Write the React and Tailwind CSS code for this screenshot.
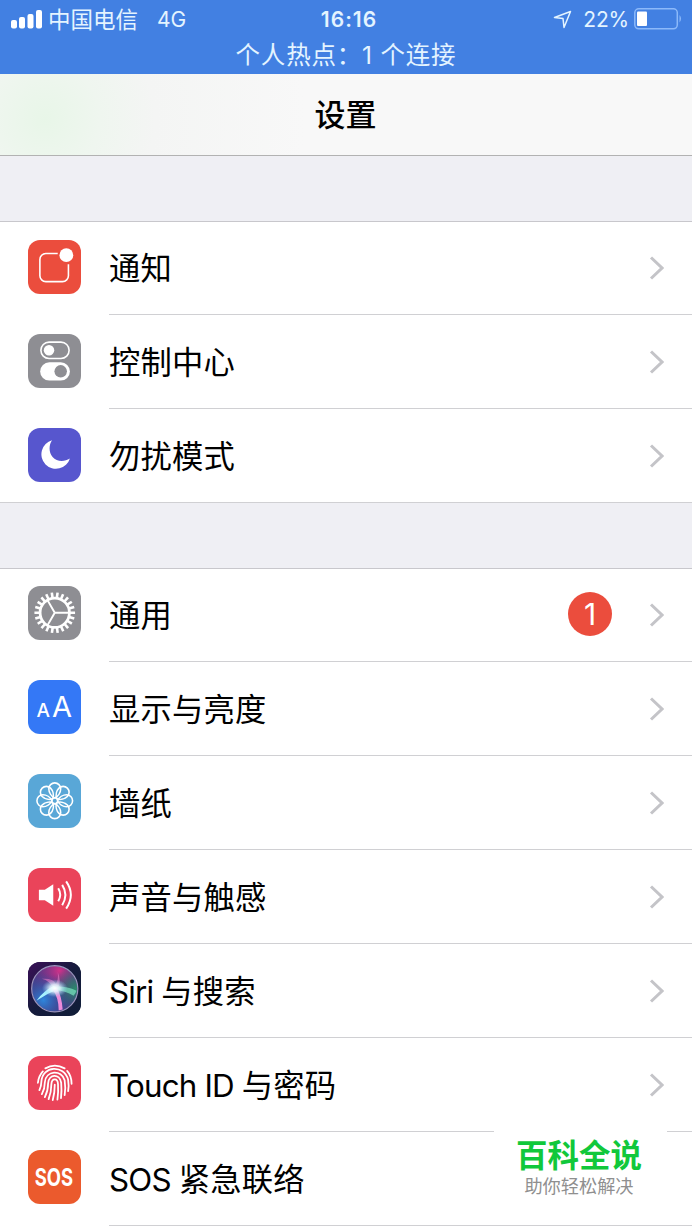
import React from 'react';

const GEAR_TEETH = Array.from({ length: 22 }, (_, i) => (i * 360) / 22);
const PETALS = Array.from({ length: 8 }, (_, i) => i * 45);

const NotificationsIcon = () => (
    <svg viewBox="0 0 54 54" className="w-full h-full" fill="none">
        <path
            d="M30 13.700H18a6 6 0 0 0-6 6V36a6 6 0 0 0 6 6h16.800a6 6 0 0 0 6-6V24.500"
            stroke="white"
            strokeWidth="1.600"
        />
        <circle cx="38.700" cy="15.300" r="7" fill="white" />
    </svg>
);

const ControlCenterIcon = () => (
    <svg viewBox="0 0 54 54" className="w-full h-full" fill="none">
        <rect x="13" y="8.200" width="28.500" height="16.500" rx="8.250" stroke="white" strokeWidth="1.600" />
        <circle cx="21.200" cy="16.400" r="5.300" fill="white" />
        <rect x="12.300" y="28.500" width="30" height="18.500" rx="9.250" fill="white" />
        <circle cx="33" cy="37.700" r="6.300" fill="#8e8e93" />
    </svg>
);

const MoonIcon = () => (
    <svg viewBox="0 0 54 54" className="w-full h-full">
        <path d="M24.300 12.300A14.700 14.700 0 1 0 42.300 30.700C36.500 34.500 29 34 24.800 29.200C20.700 24.500 21 17 24.300 12.300Z" fill="white" />
    </svg>
);

const GearIcon = () => (
    <svg viewBox="0 0 54 54" className="w-full h-full" fill="none" stroke="white">
        <circle cx="27" cy="27" r="14.800" strokeWidth="2.800" />
        {GEAR_TEETH.map((deg) => (
            <path key={deg} d="M27 12V6.500" strokeWidth="2.600" transform={`rotate(${deg + 8} 27 27)`} />
        ))}
        <path d="M27 27H42M27 27L19.500 14M27 27L19.500 40" strokeWidth="2" />
    </svg>
);

const DisplayIcon = () => (
    <div className="h-full flex items-baseline justify-center pt-[7px] text-white">
        <span className="text-[19px] leading-[40px] font-medium">A</span>
        <span className="ml-[2px] text-[29px] leading-[40px]">A</span>
    </div>
);

const WallpaperIcon = () => (
    <svg viewBox="0 0 54 54" className="w-full h-full" fill="none" stroke="white" strokeWidth="1.600">
        {PETALS.map((deg) => (
            <path
                key={deg}
                d="M27 24.200C23.500 22.500 21 18.500 21 15a6 6 0 0 1 12 0C33 18.500 30.500 22.500 27 24.200Z"
                transform={`rotate(${deg} 27 27)`}
            />
        ))}
        <circle cx="27" cy="27" r="3" />
    </svg>
);

const SoundIcon = () => (
    <svg viewBox="0 0 54 54" className="w-full h-full" fill="none" stroke="white">
        <path d="M11 22H17L25.500 16.500V38L17 32.500H11Z" fill="white" stroke="none" />
        <path d="M30.500 20.500Q34.500 27 30.500 33.500" strokeWidth="2" />
        <path d="M34.500 17Q41 27 34.500 37.500" strokeWidth="2" />
        <path d="M38.500 13.500Q48 27 38.500 41" strokeWidth="2" />
    </svg>
);

const SiriIcon = () => (
    <svg viewBox="0 0 54 54" className="w-full h-full" fill="none">
        <defs>
            <linearGradient id="siriBg" x1="0" y1="0" x2="1" y2="1">
                <stop offset="0" stopColor="#3b1058" />
                <stop offset="0.5" stopColor="#151b3c" />
                <stop offset="1" stopColor="#101e38" />
            </linearGradient>
            <radialGradient id="siriPink" cx="0.6" cy="0.1" r="0.65">
                <stop offset="0" stopColor="#cf3288" />
                <stop offset="1" stopColor="#7a2d8c" stopOpacity="0" />
            </radialGradient>
            <radialGradient id="siriBlue" cx="0.25" cy="0.75" r="0.6">
                <stop offset="0" stopColor="#2f86dc" />
                <stop offset="1" stopColor="#2d4c9c" stopOpacity="0" />
            </radialGradient>
            <radialGradient id="siriGreen" cx="0.95" cy="0.5" r="0.5">
                <stop offset="0" stopColor="#2b8a6b" />
                <stop offset="1" stopColor="#1e6a6a" stopOpacity="0" />
            </radialGradient>
            <radialGradient id="siriGlow">
                <stop offset="0" stopColor="#ffffff" />
                <stop offset="0.4" stopColor="#e4f8ff" stopOpacity="0.85" />
                <stop offset="1" stopColor="#8ad1f5" stopOpacity="0" />
            </radialGradient>
        </defs>
        <rect width="54" height="54" fill="url(#siriBg)" />
        <circle cx="27" cy="27" r="23" fill="#483b85" />
        <circle cx="27" cy="27" r="23" fill="url(#siriPink)" />
        <circle cx="27" cy="27" r="23" fill="url(#siriBlue)" />
        <circle cx="27" cy="27" r="23" fill="url(#siriGreen)" />
        <path d="M26 27Q22 19 14 17Q25 16 28 22Q31 18 30 10Q34 19 30 27Z" fill="#e279c4" opacity="0.6" />
        <path d="M8.500 39Q16 29 26 24L31 27Q19 32 8.500 39Z" fill="#a5f2ff" />
        <path d="M26 25Q38 24 49 29Q48 32 46 34Q38 29 26 28Z" fill="#7be5c0" opacity="0.7" />
        <path d="M25 28Q31 36 31 49L35 48Q34 34 29 26Z" fill="#ec8bda" />
        <ellipse cx="27" cy="26.500" rx="13" ry="9" fill="url(#siriGlow)" />
        <circle cx="27" cy="27" r="23.300" stroke="#9b94bd" strokeWidth="1.200" />
    </svg>
);

const TouchIdIcon = () => (
    <svg viewBox="0 0 54 54" className="w-full h-full" fill="none" stroke="white" strokeWidth="1.800" strokeLinecap="round">
        <path d="M17.500 12.500Q27 7 37 12.500" />
        <path d="M10 27Q10.500 20.500 15 15.500M39.500 15Q44 20 44 28" />
        <path d="M11.500 34.500Q13.500 30 13.500 26C14.500 9.500 36.500 8.500 40.500 24Q41.500 30 40.500 35.500" />
        <path d="M14 38.500Q17 33 17 26.500C18 14.500 34 13.500 37 24.500Q38.200 32 37 39.500" />
        <path d="M17 41.500Q20.300 35 20.300 27.500C21 18 32 17.500 33.500 27Q34.200 35 33.300 42.500" />
        <path d="M20.800 43.500Q23.600 36 23.600 28.500C24 22 30 22 30.300 28.500Q30.800 37 29.700 44" />
        <path d="M25 44.500Q27 37 27 29" />
    </svg>
);

const SosIcon = () => (
    <div className="h-full flex items-center justify-center pt-px text-white">
        <span className="text-[24px] leading-[40px] font-bold scale-x-[0.77]">SOS</span>
    </div>
);

const sections = [
    [
        { label: '通知', icon: NotificationsIcon, color: 'bg-[#eb4d3d]' },
        { label: '控制中心', icon: ControlCenterIcon, color: 'bg-[#8e8e93]' },
        { label: '勿扰模式', icon: MoonIcon, color: 'bg-[#5756ce]' },
    ],
    [
        { label: '通用', icon: GearIcon, color: 'bg-[#8e8e93]', badge: 1 },
        { label: '显示与亮度', icon: DisplayIcon, color: 'bg-[#3478f6]' },
        { label: '墙纸', icon: WallpaperIcon, color: 'bg-[#59a7d7]' },
        { label: '声音与触感', icon: SoundIcon, color: 'bg-[#ea445a]' },
        { latin: 'Siri ', label: '与搜索', icon: SiriIcon, color: 'bg-[#151b3c]' },
        { latin: 'Touch ID ', label: '与密码', icon: TouchIdIcon, color: 'bg-[#ea445a]' },
        { latin: 'SOS ', label: '紧急联络', icon: SosIcon, color: 'bg-[#eb5a2d]' },
    ],
];

const StatusBar = () => (
    <header className="h-[74px] bg-[#4280e2] text-[#e4f4ff]">
        <div className="h-[38px] grid grid-cols-3 items-center pl-[11px] pr-[10px]">
            <div className="flex items-center">
                <svg width="31" height="19" viewBox="0 0 31 19" fill="white">
                    <rect x="0" y="10" width="6" height="8.500" rx="2" />
                    <rect x="8" y="7" width="6" height="11.500" rx="2" />
                    <rect x="16.500" y="4" width="6" height="14.500" rx="2" />
                    <rect x="25" y="0" width="6" height="18.500" rx="2" />
                </svg>
                <span className="ml-[6px] pt-px text-[22.500px] leading-[38px]">中国电信</span>
                <span className="ml-[19px] pt-px text-[21px]">4G</span>
            </div>
            <span className="text-center text-[21px] font-semibold tracking-[1px] pl-[5px] pt-px">16:16</span>
            <div className="flex items-center justify-end">
                <svg width="19" height="19" viewBox="0 0 19 19" fill="none" stroke="currentColor" strokeWidth="1.500" strokeLinejoin="round">
                    <path d="M1.500 7.500L17.500 1.500L11 17.500L10 8.500Z" />
                </svg>
                <span className="ml-[11px] text-[21px] tracking-[-0.2px]">22%</span>
                <svg className="ml-[5px] mb-px" width="48" height="22" viewBox="0 0 48 22" fill="none">
                    <rect x="0.800" y="0.800" width="42.500" height="20" rx="4" stroke="#8cb9fa" strokeWidth="1.500" />
                    <rect x="3" y="3.500" width="10" height="14.500" rx="1" fill="white" />
                    <path d="M45.500 7q3 3.500 0 7.500z" fill="#8cb9fa" />
                </svg>
            </div>
        </div>
        <p className="h-[34px] text-center text-[24.500px] leading-[35px] tracking-[0.8px] whitespace-pre">个人热点：1 个连接</p>
    </header>
);

const SettingsRow = ({ latin, label, icon: Icon, color, badge }) => (
    <div className="group/row h-[94px] flex pl-[27.500px] group-first/section:last:border-b border-[#d0d0d3]">
        <div className={`mt-[18.400px] group-first/section:mt-[19px] w-[53.500px] h-[53.500px] shrink-0 rounded-[12px] overflow-hidden ${color}`}>
            <Icon />
        </div>
        <div className="ml-[28px] flex-1 flex items-center border-b border-[#d0d0d3] group-first/section:group-last/row:border-b-0 pr-[28px] pt-px">
            <span className="flex-1 pt-px text-[31.300px] leading-[40px] tracking-[0.200px] text-black">
                {latin && <span className="tracking-[-0.800px] whitespace-pre">{latin}</span>}
                {label}
            </span>
            {badge && (
                <span className="w-[44px] h-[44px] mr-[37px] mb-[2px] rounded-full bg-[#eb4d3d] text-white text-[30px] flex items-center justify-center">
                    {badge}
                </span>
            )}
            <svg width="15" height="24" viewBox="0 0 15 24" fill="none" stroke="#c4c4c8" strokeWidth="3">
                <path d="M2 1.500L13 12L2 22.500" />
            </svg>
        </div>
    </div>
);

const App = () => (
    <div className="relative w-[692px] h-[1230px] overflow-hidden bg-[#efeff4] font-['Inter','Noto_Sans_CJK_SC',sans-serif]">
        <StatusBar />
        <nav className="h-[82px] flex items-center justify-center border-b border-[#b2b2b2] bg-[#f8f8f8] bg-[radial-gradient(circle_at_45px_45px,#e8f6e8,#eff6ef_55px,#f4f5f4_110px,#f8f8f8_260px)]">
            <h1 className="pt-px pr-px text-[31px] font-medium leading-[40px] text-black">设置</h1>
        </nav>
        <main className="pt-[65px] flex flex-col gap-[65px]">
            {sections.map((rows, i) => (
                <section key={i} className="group/section bg-white shadow-[inset_0_1px_0_#c8c7cc] last:pb-[4px]">
                    {rows.map((row) => (
                        <SettingsRow key={row.label} {...row} />
                    ))}
                </section>
            ))}
        </main>
        <div className="absolute left-[494px] top-[1128px] w-[173px] h-[80px] bg-white flex flex-col items-center pt-[8px] pr-[3px]">
            <span className="text-[31.500px] leading-[40px] font-bold text-[#11c83b]">百科全说</span>
            <span className="text-[18.200px] leading-[20px] text-[#8f8f8f]">助你轻松解决</span>
        </div>
    </div>
);

export default App;
